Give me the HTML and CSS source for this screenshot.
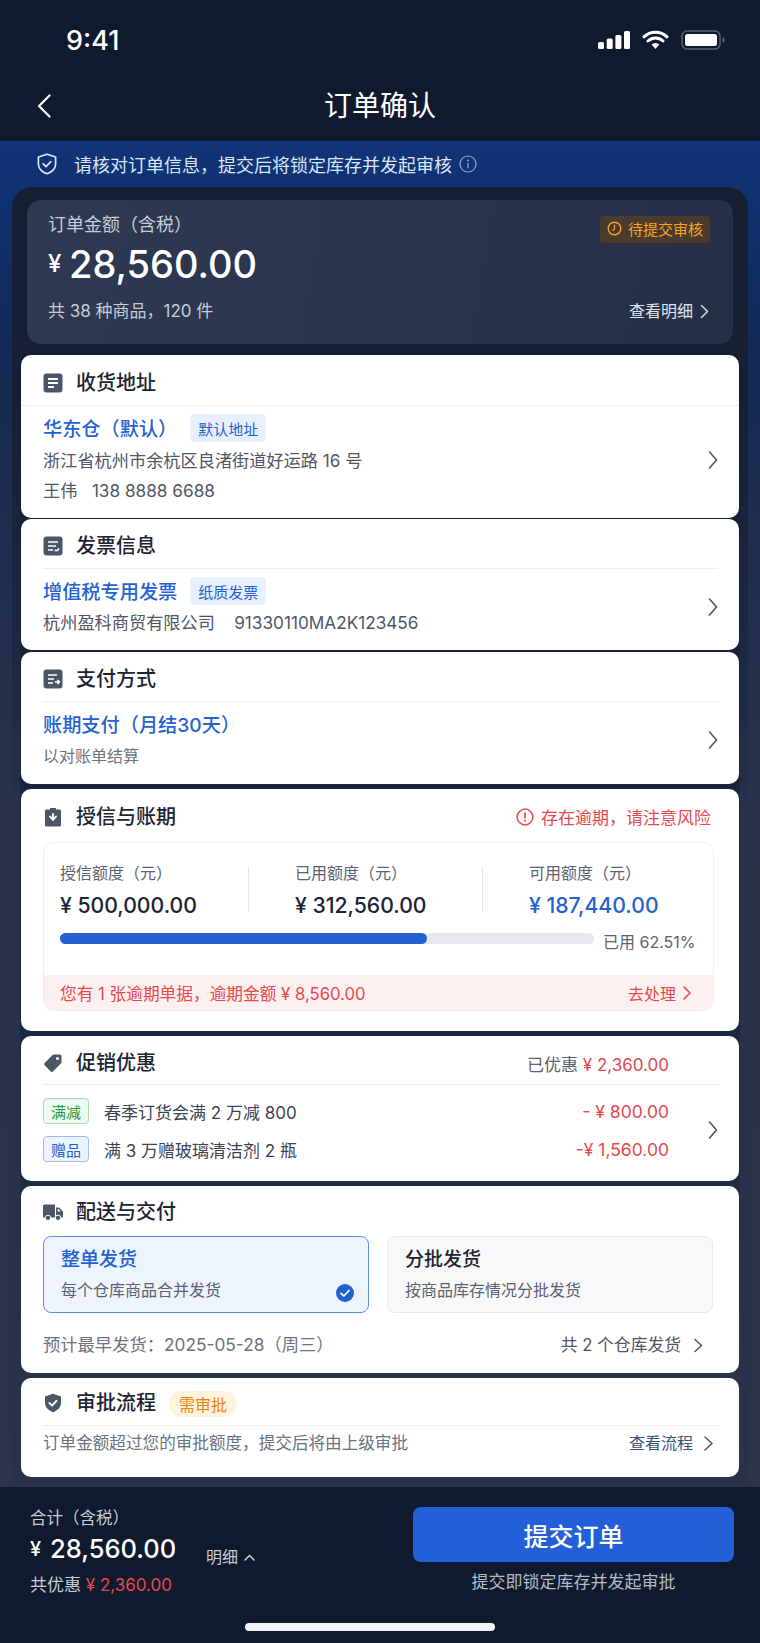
FILE: index.html
```html
<!DOCTYPE html>
<html lang="zh-CN">
<head>
    <meta charset="UTF-8">
    <meta name="viewport" content="width=device-width, initial-scale=1.0">
    <title>订单确认</title>
    <link rel="stylesheet" href="styles.css">
</head>
<body>

    <div class="statusbar">
        <span class="time">9:41</span>
        <div class="status-icons">
            <svg width="32" height="18" viewBox="0 0 32 18"><rect x="0" y="11" width="6" height="7" rx="1.5" fill="#fff"/><rect x="8.7" y="7.5" width="6" height="10.5" rx="1.5" fill="#fff"/><rect x="17.4" y="4" width="6" height="14" rx="1.5" fill="#fff"/><rect x="26" y="0" width="6" height="18" rx="1.5" fill="#fff"/></svg>
            <svg width="27" height="20" viewBox="0 0 27 20"><path d="M2 6.8a16.5 16.5 0 0 1 23 0M6 11a11 11 0 0 1 15 0" fill="none" stroke="#fff" stroke-width="3" stroke-linecap="round"/><path d="M9.6 14.6a5.6 5.6 0 0 1 7.8 0L13.5 19z" fill="#fff"/></svg>
            <svg width="44" height="20" viewBox="0 0 44 20"><rect x="1" y="1" width="38" height="18" rx="5" fill="none" stroke="#59606e" stroke-width="1.6"/><rect x="4" y="4" width="32" height="12" rx="2.5" fill="#fff"/><path d="M41.5 7v6c1.4-.4 2.3-1.6 2.3-3s-.9-2.6-2.3-3z" fill="#59606e"/></svg>
        </div>
    </div>

    <header class="navbar">
        <svg class="back" width="14" height="24" viewBox="0 0 14 24"><path d="M12.5 1.5 2 12l10.5 10.5" fill="none" stroke="#fff" stroke-width="2.2" stroke-linecap="round" stroke-linejoin="round"/></svg>
        <h1>订单确认</h1>
    </header>

    <div class="notice">
        <svg width="20" height="22" viewBox="0 0 20 22"><path d="M10 1.2 18.6 4v7c0 4.6-3.4 8-8.6 9.8C4.8 19 1.4 15.600 1.400 11V4z" fill="none" stroke="#dbe6f8" stroke-width="1.7" stroke-linejoin="round"/><path d="M6.200 10.800 9 13.600l4.800-5" fill="none" stroke="#dbe6f8" stroke-width="1.700" stroke-linecap="round" stroke-linejoin="round"/></svg>
        <span class="notice-text">请核对订单信息，提交后将锁定库存并发起审核</span>
        <svg width="18" height="18" viewBox="0 0 18 18"><circle cx="9" cy="9" r="8" fill="none" stroke="#8fa6cf" stroke-width="1.200"/><path d="M9 8v5.200" stroke="#8fa6cf" stroke-width="1.300"/><circle cx="9" cy="5.400" r="1" fill="#8fa6cf"/></svg>
    </div>

    <main class="panel">

        <section class="summary">
            <div class="summary-top">
                <span class="summary-label">订单金额（含税）</span>
                <span class="status-tag">
                    <svg width="15" height="15" viewBox="0 0 15 15"><circle cx="7.500" cy="7.500" r="6.300" fill="none" stroke="#f5a524" stroke-width="1.400"/><path d="M7.500 4.200v3.600l-1.500 1.400" fill="none" stroke="#f5a524" stroke-width="1.300" stroke-linecap="round"/></svg>
                    待提交审核
                </span>
            </div>
            <div class="summary-amount"><span class="yen">¥</span>28,560.00</div>
            <div class="summary-meta">
                <span class="summary-count">共 38 种商品，120 件</span>
                <span class="summary-link">查看明细
                    <svg width="9" height="15" viewBox="0 0 9 15"><path d="M1.500 1.500 7.500 7.500l-6 6" fill="none" stroke="#d7dce6" stroke-width="1.500" stroke-linecap="round" stroke-linejoin="round"/></svg>
                </span>
            </div>
        </section>

        <div class="cards">

            <section class="card card-address">
                <div class="card-head head-full">
                    <svg class="head-icon" viewBox="0 0 20 20"><rect x="0.500" y="0.500" width="19" height="19" rx="3" fill="#4d5569"/><path d="M5 6h10M5 10h10M5 14h6" stroke="#fff" stroke-width="1.800"/></svg>
                    <h2>收货地址</h2>
                </div>
                <div class="card-row">
                    <div class="row-main">
                        <div class="name-line"><span class="name">华东仓（默认）</span><span class="soft-tag">默认地址</span></div>
                        <div class="sub-line">浙江省杭州市余杭区良渚街道好运路 16 号</div>
                        <div class="sub-line">王伟&nbsp;&nbsp; 138 8888 6688</div>
                    </div>
                    <svg class="chevron" viewBox="0 0 10 18"><path d="M1.500 1 8.500 9l-7 8" fill="none" stroke="#4d5569" stroke-width="1.600" stroke-linecap="round" stroke-linejoin="round"/></svg>
                </div>
            </section>

            <section class="card card-invoice">
                <div class="card-head">
                    <svg class="head-icon" viewBox="0 0 20 20"><rect x="0.500" y="0.500" width="19" height="19" rx="3" fill="#4d5569"/><path d="M5 6h10M5 10h8M5 14h5M11.500 14.500h3l1.500-2" fill="none" stroke="#fff" stroke-width="1.700"/></svg>
                    <h2>发票信息</h2>
                </div>
                <div class="card-row">
                    <div class="row-main">
                        <div class="name-line"><span class="name">增值税专用发票</span><span class="soft-tag">纸质发票</span></div>
                        <div class="sub-line">杭州盈科商贸有限公司&nbsp;&nbsp;&nbsp; 91330110MA2K123456</div>
                    </div>
                    <svg class="chevron" viewBox="0 0 10 18"><path d="M1.500 1 8.500 9l-7 8" fill="none" stroke="#4d5569" stroke-width="1.600" stroke-linecap="round" stroke-linejoin="round"/></svg>
                </div>
            </section>

            <section class="card card-pay">
                <div class="card-head">
                    <svg class="head-icon" viewBox="0 0 20 20"><rect x="0.500" y="0.500" width="19" height="19" rx="3" fill="#4d5569"/><path d="M5 6h9M5 10h6M5 14h5M12 13h4M14.500 11l1.800 2-1.800 2" fill="none" stroke="#fff" stroke-width="1.600"/></svg>
                    <h2>支付方式</h2>
                </div>
                <div class="card-row">
                    <div class="row-main">
                        <div class="name-line"><span class="name">账期支付（月结30天）</span></div>
                        <div class="sub-line sub-muted">以对账单结算</div>
                    </div>
                    <svg class="chevron" viewBox="0 0 10 18"><path d="M1.500 1 8.500 9l-7 8" fill="none" stroke="#4d5569" stroke-width="1.600" stroke-linecap="round" stroke-linejoin="round"/></svg>
                </div>
            </section>

            <section class="card">
                <div class="card-head head-plain head-credit">
                    <svg class="head-icon" viewBox="0 0 20 20"><path d="M3.500 2.500H7V1h6v1.500h3.500A1.500 1.500 0 0 1 18 4v14a1.500 1.500 0 0 1-1.500 1.500h-13A1.500 1.500 0 0 1 2 18V4a1.500 1.500 0 0 1 1.500-1.500z" fill="#4d5569"/><path d="M7 9.500 10 13l3-3.500M10 7v5.500" fill="none" stroke="#fff" stroke-width="1.900" stroke-linecap="round" stroke-linejoin="round"/></svg>
                    <h2>授信与账期</h2>
                    <span class="risk">
                        <svg width="18" height="18" viewBox="0 0 18 18"><circle cx="9" cy="9" r="7.900" fill="none" stroke="#e5484d" stroke-width="1.500"/><path d="M9 4.600v5.600" stroke="#e5484d" stroke-width="1.600"/><circle cx="9" cy="12.800" r="1" fill="#e5484d"/></svg>
                        存在逾期，请注意风险
                    </span>
                </div>
                <div class="credit-box">
                    <div class="stats">
                        <div class="stat">
                            <div class="stat-label">授信额度（元）</div>
                            <div class="stat-value">¥ 500,000.00</div>
                        </div>
                        <div class="stat-sep"></div>
                        <div class="stat stat-mid">
                            <div class="stat-label">已用额度（元）</div>
                            <div class="stat-value">¥ 312,560.00</div>
                        </div>
                        <div class="stat-sep"></div>
                        <div class="stat stat-last">
                            <div class="stat-label">可用额度（元）</div>
                            <div class="stat-value stat-blue">¥ 187,440.00</div>
                        </div>
                    </div>
                    <div class="usage">
                        <div class="usage-track"><div class="usage-fill" style="width: 68.7%"></div></div>
                        <span class="usage-text">已用 62.51%</span>
                    </div>
                    <div class="overdue">
                        <span class="overdue-text">您有 1 张逾期单据，逾期金额 ¥ 8,560.00</span>
                        <span class="overdue-link">去处理
                            <svg width="8" height="14" viewBox="0 0 8 14"><path d="M1 1l6 6-6 6" fill="none" stroke="#e5484d" stroke-width="1.500" stroke-linecap="round" stroke-linejoin="round"/></svg>
                        </span>
                    </div>
                </div>
            </section>

            <section class="card">
                <div class="card-head head-promo">
                    <svg class="head-icon" viewBox="0 0 20 20"><path d="M11 1.500h6A1.500 1.500 0 0 1 18.500 3v6a2 2 0 0 1-.6 1.400l-8 8a1.500 1.500 0 0 1-2.100 0l-6.200-6.200a1.500 1.500 0 0 1 0-2.100l8-8A2 2 0 0 1 11 1.500z" fill="#4d5569"/><circle cx="14.500" cy="5.500" r="1.500" fill="#fff"/></svg>
                    <h2>促销优惠</h2>
                    <span class="saved">已优惠 <em>¥ 2,360.00</em></span>
                </div>
                <div class="promo-body">
                    <div class="promo-list">
                        <div class="promo-row">
                            <span class="promo-tag tag-green">满减</span>
                            <span class="promo-text">春季订货会满 2 万减 800</span>
                            <span class="promo-amount">- ¥ 800.00</span>
                        </div>
                        <div class="promo-row">
                            <span class="promo-tag tag-blue">赠品</span>
                            <span class="promo-text">满 3 万赠玻璃清洁剂 2 瓶</span>
                            <span class="promo-amount">-¥ 1,560.00</span>
                        </div>
                    </div>
                    <svg class="chevron" viewBox="0 0 10 18"><path d="M1.500 1 8.500 9l-7 8" fill="none" stroke="#4d5569" stroke-width="1.600" stroke-linecap="round" stroke-linejoin="round"/></svg>
                </div>
            </section>

            <section class="card">
                <div class="card-head head-plain">
                    <svg class="head-icon" viewBox="0 0 20 20"><path d="M0 4a1.500 1.500 0 0 1 1.500-1.500H12V15.500H0z" fill="#4d5569"/><path d="M13 5.500h3l4 4v6h-7z" fill="#4d5569"/><path d="M14.500 7h1.200l2 2.500h-3.200z" fill="#fff"/><circle cx="5" cy="15.800" r="2.700" fill="#4d5569" stroke="#fff"/><circle cx="15" cy="15.800" r="2.700" fill="#4d5569" stroke="#fff"/></svg>
                    <h2>配送与交付</h2>
                </div>
                <div class="ship-options">
                    <div class="ship-option ship-active">
                        <div class="ship-title">整单发货</div>
                        <div class="ship-sub">每个仓库商品合并发货</div>
                        <svg class="ship-check" viewBox="0 0 18 18"><circle cx="9" cy="9" r="9" fill="#2360d0"/><path d="M5 9.300 7.900 12 13 6.500" fill="none" stroke="#fff" stroke-width="1.700" stroke-linecap="round" stroke-linejoin="round"/></svg>
                    </div>
                    <div class="ship-option">
                        <div class="ship-title">分批发货</div>
                        <div class="ship-sub">按商品库存情况分批发货</div>
                    </div>
                </div>
                <div class="ship-foot">
                    <span class="ship-date">预计最早发货：2025-05-28（周三）</span>
                    <span class="ship-link">共 2 个仓库发货
                        <svg width="9" height="15" viewBox="0 0 9 15"><path d="M1 1.500 7.500 7.500l-6.500 6" fill="none" stroke="#4d5569" stroke-width="1.500" stroke-linecap="round" stroke-linejoin="round"/></svg>
                    </span>
                </div>
            </section>

            <section class="card">
                <div class="card-head head-approve">
                    <svg class="head-icon" viewBox="0 0 20 22"><path d="M10 .8 18.800 3.800v7c0 4.800-3.500 8.300-8.800 10.400C4.700 19.100 1.200 15.600 1.200 10.800v-7z" fill="#4d5569"/><path d="M6 11l3 3 5-5.500" fill="none" stroke="#fff" stroke-width="2" stroke-linecap="round" stroke-linejoin="round"/></svg>
                    <h2>审批流程</h2>
                    <span class="approve-tag">需审批</span>
                </div>
                <div class="approve-row">
                    <span class="approve-text">订单金额超过您的审批额度，提交后将由上级审批</span>
                    <span class="approve-link">查看流程
                        <svg width="9" height="15" viewBox="0 0 9 15"><path d="M1 1 8 7.500 1 14" fill="none" stroke="#4d5569" stroke-width="1.500" stroke-linecap="round" stroke-linejoin="round"/></svg>
                    </span>
                </div>
            </section>

        </div>
    </main>

    <footer class="bottombar">
        <div class="bottom-main">
            <div class="total">
                <div class="total-label">合计（含税）</div>
                <div class="total-amount"><span class="total-yen">¥</span>28,560.00</div>
                <div class="total-saved">共优惠 <em>¥ 2,360.00</em></div>
            </div>
            <span class="detail-toggle">明细
                <svg width="11" height="7" viewBox="0 0 11 7"><path d="M1 6l4.500-4.500L10 6" fill="none" stroke="#d7dce6" stroke-width="1.400" stroke-linecap="round" stroke-linejoin="round"/></svg>
            </span>
            <div class="submit">
                <button type="submit">提交订单</button>
                <p>提交即锁定库存并发起审批</p>
            </div>
        </div>
        <div class="home-indicator"></div>
    </footer>

</body>
</html>
```

FILE: styles.css
```css
* {
    box-sizing: border-box;
}

body {
    margin: 0;
    width: 760px;
    height: 1643px;
    overflow: hidden;
    display: flex;
    flex-direction: column;
    font-family: Inter, "Noto Sans CJK SC", sans-serif;
    color: #1c2433;
    background: linear-gradient(#0f1a2e 0, #0f1a2e 141px, #103479 141px, #10316f 210px, #112a55 340px, #1e2d4e 520px, #29324a 800px, #2b3449 1487px);
}

svg {
    flex-shrink: 0;
    display: block;
}

em {
    font-style: normal;
}

/* top of the phone */
.statusbar {
    height: 70px;
    padding: 10px 35px 0 66px;
    display: flex;
    align-items: center;
    justify-content: space-between;
    background-color: #0f1a2e;
    color: #fff;
}

.time {
    font-size: 27px;
    font-weight: 500;
}

.status-icons {
    display: flex;
    align-items: center;
    gap: 12px;
}

.navbar {
    height: 71px;
    padding: 0 37px;
    display: grid;
    grid-template-columns: 1fr auto 1fr;
    align-items: center;
    background-color: #0f1a2e;
}

.navbar h1 {
    margin: 0;
    font-size: 28px;
    font-weight: 400;
    line-height: 38px;
    color: #fff;
}

.notice {
    height: 46px;
    padding-left: 37px;
    display: flex;
    align-items: center;
    color: #dbe6f8;
    font-size: 18px;
}

.notice-text {
    margin: 0 7px 0 17px;
}

/* dark panel */
.panel {
    flex: 1;
    margin: 0 12px;
    padding: 13px 8px 0;
    border-radius: 20px 20px 0 0;
    background: linear-gradient(#151e33 0, #161f33 200px, #1d2a44 500px, #29324a 640px);
    display: flex;
    flex-direction: column;
}

.summary {
    height: 144px;
    margin: 0 7px 11px;
    padding: 13px 24px 0 21px;
    border-radius: 14px;
    background: linear-gradient(100deg, #2f3a52, #262f48);
    color: #c6ccd8;
}

.summary-top {
    display: flex;
    justify-content: space-between;
}

.summary-label {
    font-size: 18px;
    line-height: 24px;
}

.status-tag {
    height: 27px;
    margin: 3px -1px 0 0;
    padding: 0 7px 2px;
    display: flex;
    align-items: center;
    gap: 6px;
    border-radius: 4px;
    background-color: #4a3b2b;
    color: #f5a524;
    font-size: 15px;
}

.summary-amount {
    margin-top: 1px;
    display: flex;
    align-items: center;
    font-size: 38px;
    font-weight: 500;
    line-height: 40px;
    color: #fff;
}

.yen {
    width: 21px;
    font-size: 24px;
}

.summary-meta {
    margin-top: 15px;
    display: flex;
    align-items: center;
    justify-content: space-between;
    font-size: 16px;
    line-height: 24px;
}

.summary-count {
    font-size: 17px;
}

.summary-link {
    display: flex;
    align-items: center;
    gap: 7px;
    color: #e1e5ec;
}

/* white cards */
.cards {
    flex: 1;
    margin-bottom: 10px;
    display: flex;
    flex-direction: column;
    gap: 5px;
    background: linear-gradient(#141c30 0, #1a2540 500px, #1c2a44 800px, #2a3348 1020px);
}

.card {
    margin: 0 1px;
    padding: 0 21px 0 22px;
    border-radius: 10px;
    background-color: #fff;
}

.card-invoice {
    margin-top: -4px;
}

.card-pay {
    margin-top: -3px;
}

.card-head {
    height: 50px;
    padding-top: 5px;
    display: flex;
    align-items: center;
    gap: 13px;
    border-bottom: 1px solid #eceef2;
}

.head-full {
    height: 51px;
    margin: 0 -21px 0 -22px;
    padding-left: 22px;
}

.head-plain {
    border-bottom: none;
    padding-top: 2px;
}

.head-credit {
    height: 53px;
}

.head-promo {
    height: 49px;
    padding-top: 6px;
}

.head-approve {
    height: 48px;
    padding-top: 2px;
}

.head-icon {
    width: 20px;
    height: 20px;
}

.card-head h2 {
    margin: 0;
    font-size: 20px;
    font-weight: 500;
    line-height: 28px;
}

.card-row {
    padding: 7px 0 12px;
    display: flex;
    align-items: center;
}

.card-pay .card-row {
    padding-bottom: 13px;
}

.row-main {
    flex: 1;
}

.chevron {
    width: 10px;
    height: 18px;
}

.name-line {
    height: 30px;
    margin-bottom: 2px;
    display: flex;
    align-items: center;
}

.card-address .name-line {
    margin-bottom: 3px;
}

.name {
    font-size: 19.200px;
    font-weight: 500;
    color: #2462d2;
}

.soft-tag {
    height: 28px;
    margin-left: 13px;
    padding: 0 8px;
    display: flex;
    align-items: center;
    border-radius: 4px;
    background-color: #e8f0fd;
    color: #2462d2;
    font-size: 15px;
}

.sub-line {
    font-size: 17.200px;
    line-height: 30px;
    color: #4f5766;
}

.sub-muted {
    font-size: 16px;
    color: #6b7280;
}

/* credit */
.risk {
    margin-left: auto;
    margin-right: 7px;
    display: flex;
    align-items: center;
    gap: 7px;
    color: #e5484d;
    font-size: 17px;
}

.credit-box {
    margin: 0 4px 20px 0;
    height: 169px;
    border: 1px solid #eef0f3;
    border-radius: 10px;
    overflow: hidden;
}

.stats {
    padding: 20px 0 0 16px;
    display: flex;
}

.stat {
    width: 188px;
}

.stat-mid {
    width: 233px;
    padding-left: 46px;
}

.stat-last {
    width: 200px;
    padding-left: 46px;
}

.stat-sep {
    width: 1px;
    height: 45px;
    margin-top: 4px;
    background-color: #e5e7eb;
}

.stat-label {
    font-size: 16px;
    line-height: 20px;
    color: #5b6270;
}

.stat-value {
    margin-top: 7px;
    font-size: 21.200px;
    font-weight: 500;
    line-height: 30px;
    white-space: nowrap;
}

.stat-blue {
    color: #2462d2;
}

.usage {
    margin-top: 10px;
    padding-left: 16px;
    display: flex;
    align-items: flex-start;
    gap: 9px;
}

.usage-track {
    width: 534px;
    height: 11px;
    margin-top: 3px;
    border-radius: 6px;
    background-color: #e6e8ed;
}

.usage-fill {
    height: 100%;
    border-radius: 6px;
    background-color: #2360d0;
}

.usage-text {
    font-size: 16px;
    line-height: 24px;
    color: #5b6270;
}

.overdue {
    height: 36px;
    margin-top: 21px;
    padding: 0 22px 0 16px;
    display: flex;
    align-items: center;
    justify-content: space-between;
    background-color: #fdf0f0;
    color: #e5484d;
    font-size: 16px;
}

.overdue-text {
    font-size: 16.700px;
}

.overdue-link {
    display: flex;
    align-items: center;
    gap: 7px;
}

/* promotions */
.saved {
    margin-left: auto;
    margin-right: 49px;
    font-size: 17px;
    color: #5b6270;
}

.saved em,
.total-saved em {
    color: #e5484d;
}

.promo-body {
    padding: 13px 0 19px;
    display: flex;
    align-items: center;
}

.promo-list {
    flex: 1;
    margin-right: 39px;
    display: flex;
    flex-direction: column;
    gap: 12px;
}

.promo-row {
    height: 26px;
    display: flex;
    align-items: center;
    font-size: 17px;
    color: #3c4454;
}

.promo-tag {
    width: 46px;
    height: 26px;
    margin-right: 15px;
    display: flex;
    align-items: center;
    justify-content: center;
    border: 1px solid;
    border-radius: 4px;
    font-size: 15px;
}

.tag-green {
    border-color: #a5dcb3;
    background-color: #eef9f0;
    color: #1f9d45;
}

.tag-blue {
    border-color: #9dbcf0;
    background-color: #eef4fe;
    color: #2462d2;
}

.promo-text {
    flex: 1;
}

.promo-amount {
    font-size: 17.500px;
    color: #e5484d;
}

/* shipping */
.ship-options {
    display: grid;
    grid-template-columns: 326px 326px;
    gap: 18px;
}

.ship-option {
    position: relative;
    height: 77px;
    padding: 9px 0 0 17px;
    border: 1px solid #e8eaee;
    border-radius: 8px;
    background-color: #f7f8fa;
}

.ship-active {
    border-color: #5d8fe6;
    background-color: #eef4fe;
}

.ship-title {
    font-size: 19px;
    font-weight: 500;
    line-height: 28px;
}

.ship-active .ship-title {
    color: #2462d2;
}

.ship-sub {
    margin-top: 3px;
    font-size: 16px;
    line-height: 26px;
    color: #5b6270;
}

.ship-check {
    position: absolute;
    right: 14px;
    bottom: 10px;
    width: 18px;
    height: 18px;
}

.ship-foot {
    margin-top: 20px;
    padding: 0 15px 16px 0;
    display: flex;
    align-items: center;
    justify-content: space-between;
    font-size: 16.800px;
    line-height: 24px;
}

.ship-date {
    font-size: 17.300px;
    color: #6b7280;
}

.ship-link {
    display: flex;
    align-items: center;
    gap: 13px;
    color: #4f5766;
}

/* approval */
.approve-tag {
    height: 26px;
    padding: 0 10px;
    margin-top: 2px;
    display: flex;
    align-items: center;
    border-radius: 13px;
    background-color: #fff3e0;
    color: #e8860c;
    font-size: 16px;
}

.approve-row {
    padding: 5px 5px 22px 0;
    display: flex;
    align-items: center;
    justify-content: space-between;
    font-size: 16px;
    line-height: 24px;
    color: #6b7280;
}

.approve-text {
    font-size: 16.600px;
}

.approve-link {
    display: flex;
    align-items: center;
    gap: 11px;
    color: #35557f;
}

/* bottom bar */
.bottombar {
    height: 156px;
    padding: 20px 26px 0 30px;
    background-color: #0f1a2e;
    color: #c6ccd8;
}

.bottom-main {
    display: flex;
    align-items: flex-start;
}

.total {
    width: 176px;
}

.total-label {
    font-size: 16.500px;
    line-height: 22px;
}

.total-amount {
    margin-top: 3px;
    display: flex;
    align-items: center;
    font-size: 25.500px;
    font-weight: 500;
    line-height: 34px;
    color: #fff;
}

.total-yen {
    width: 20px;
    font-size: 20px;
}

.total-saved {
    margin-top: 7px;
    font-size: 17px;
    line-height: 24px;
}

.detail-toggle {
    margin-top: 38px;
    display: flex;
    align-items: center;
    gap: 6px;
    font-size: 16px;
    line-height: 24px;
}

.submit {
    margin-left: auto;
    width: 321px;
    text-align: center;
}

.submit button {
    width: 100%;
    height: 55px;
    border: none;
    border-radius: 8px;
    background-color: #2360d8;
    color: #fff;
    font-family: inherit;
    font-size: 25px;
    font-weight: 500;
}

.submit p {
    margin: 8px 0 0;
    font-size: 17px;
    line-height: 24px;
    color: #b4bbc9;
}

.home-indicator {
    width: 250px;
    height: 8px;
    margin: 26px 0 0 215px;
    border-radius: 4px;
    background-color: #f2f3f5;
}
```
